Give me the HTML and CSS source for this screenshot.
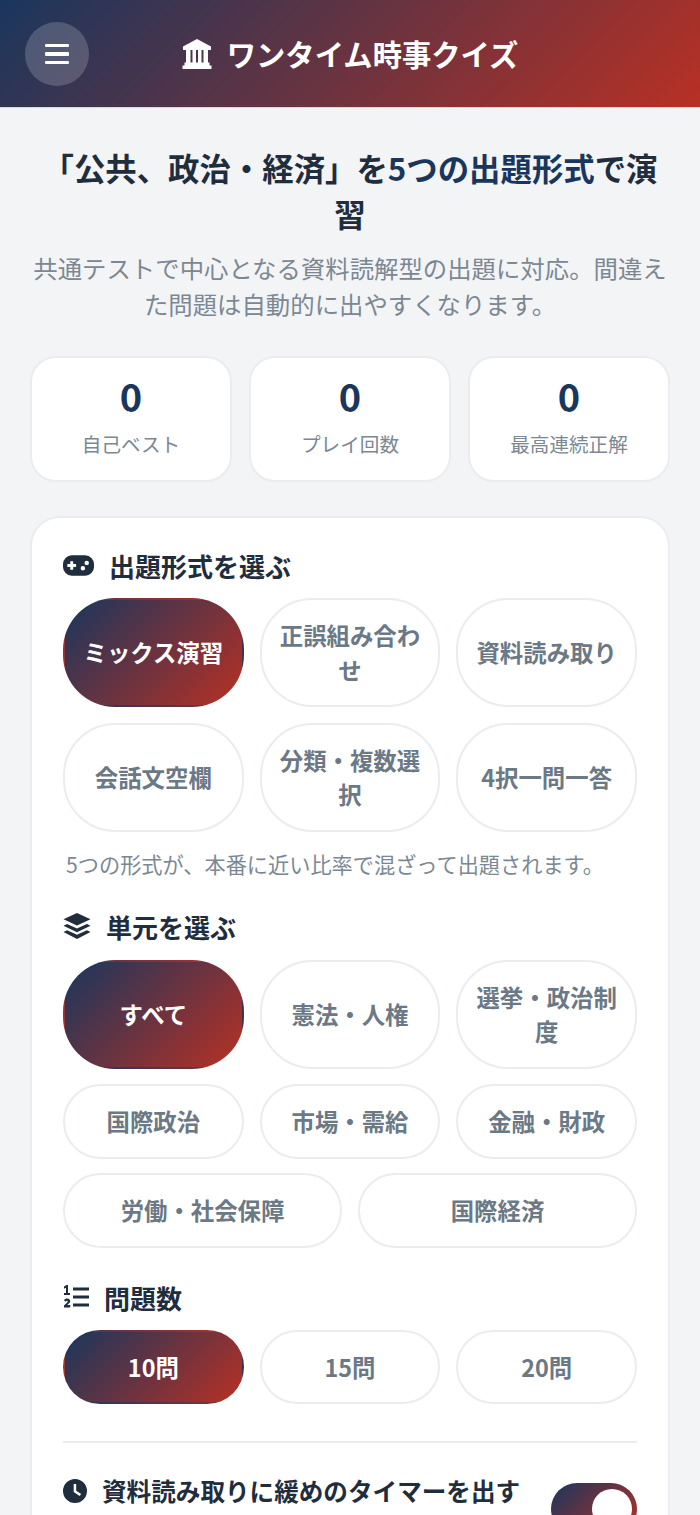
FILE: index.html
```html
<!DOCTYPE html>
<html lang="ja">
<head>
<meta charset="utf-8">
<title>ワンタイム時事クイズ</title>
<link rel="stylesheet" href="styles.css">
</head>
<body>
<header class="topbar">
  <button class="menu-btn" aria-label="メニュー"><span></span><span></span><span></span></button>
  <h1 class="brand">
    <svg class="brand-icon" viewBox="0 0 30 30"><path d="M15 0 29 7.500V11H1V7.500z"/><path d="M4 11h4.500v12.500H4zM10.500 11h3.500v12.500h-3.500zM16 11h3.500v12.500H16zM21.500 11H26v12.500h-4.500zM2.500 23.500h25V27h-25zM0.500 26.500h29V30H0.500z"/></svg>
    <span>ワンタイム時事クイズ</span>
  </h1>
  <span></span>
</header>
<main class="page">
  <section class="intro">
    <h2 class="intro-title">「公共、政治・経済」を<span class="accent">5つの出題形式</span>で演習</h2>
    <p class="intro-sub">共通テストで中心となる資料読解型の出題に対応。間違えた問題は自動的に出やすくなります。</p>
  </section>
  <section class="stats">
    <div class="stat"><div class="stat-num">0</div><div class="stat-label">自己ベスト</div></div>
    <div class="stat"><div class="stat-num">0</div><div class="stat-label">プレイ回数</div></div>
    <div class="stat"><div class="stat-num">0</div><div class="stat-label">最高連続正解</div></div>
  </section>
  <section class="card">
    <h3 class="sec-head">
      <svg class="ico ico-pad" viewBox="0 0 32 21"><path fill-rule="evenodd" d="M9 0h14a9 9 0 0 1 9 9v3a9 9 0 0 1-9 9H9a9 9 0 0 1-9-9V9a9 9 0 0 1 9-9zM7.500 6v3h-3v3h3v3h3v-3h3V9h-3V6zM24.500 5.500a2.300 2.300 0 1 0 0 4.600 2.300 2.300 0 0 0 0-4.600zM20.500 11a2.300 2.300 0 1 0 0 4.600 2.300 2.300 0 0 0 0-4.600z"/></svg>
      出題形式を選ぶ
    </h3>
    <div class="pills">
      <button class="pill active">ミックス演習</button>
      <button class="pill">正誤組み合わせ</button>
      <button class="pill">資料読み取り</button>
      <button class="pill">会話文空欄</button>
      <button class="pill">分類・複数選択</button>
      <button class="pill">4択一問一答</button>
    </div>
    <p class="hint">5つの形式が、本番に近い比率で混ざって出題されます。</p>
    <h3 class="sec-head sec-units">
      <svg class="ico ico-layers" viewBox="0 0 26 25"><path d="M13 0l13 6-13 6L0 6z"/><path d="M3.500 10.500 13 15l9.500-4.500L26 12.300 13 18.500 0 12.300z"/><path d="M3.500 16.500 13 21l9.500-4.500L26 18.300 13 25 0 18.300z"/></svg>
      単元を選ぶ
    </h3>
    <div class="pills">
      <button class="pill active">すべて</button>
      <button class="pill">憲法・人権</button>
      <button class="pill">選挙・政治制度</button>
      <button class="pill">国際政治</button>
      <button class="pill">市場・需給</button>
      <button class="pill">金融・財政</button>
    </div>
    <div class="pills pills-two">
      <button class="pill">労働・社会保障</button>
      <button class="pill">国際経済</button>
    </div>
    <h3 class="sec-head sec-count">
      <svg class="ico ico-list" viewBox="0 0 26 24"><path d="M1 1.500 3.500 0H5v8h2v2H1V8h2V2.800L1 3.700zM1 15.500C1.500 14 3 13.500 4.200 13.500c1.800 0 3 1 3 2.500 0 1.400-1 2.300-3 4h3v2.500H1v-2c2.500-2.200 3.700-3.300 3.700-4.300 0-.7-1.500-.7-1.700.6z"/><path d="M10 2.500h16v3H10zM10 10.500h16v3H10zM10 18.500h16v3H10z"/></svg>
      問題数
    </h3>
    <div class="pills">
      <button class="pill active">10問</button>
      <button class="pill">15問</button>
      <button class="pill">20問</button>
    </div>
    <hr class="rule">
    <div class="timer-row">
      <div class="timer-label">
        <svg class="ico ico-clock" viewBox="0 0 24 24"><path fill-rule="evenodd" d="M12 0a12 12 0 1 1 0 24 12 12 0 0 1 0-24zM10.700 5v8l6 4 1.400-2-4.900-3.200V5z"/></svg>
        資料読み取りに緩めのタイマーを出す
      </div>
      <span class="switch"><span class="knob"></span></span>
    </div>
  </section>
</main>
</body>
</html>
```
FILE: styles.css
```css
* { box-sizing: border-box; }
html, body { margin: 0; padding: 0; }
body {
  background: #f3f4f6;
  font-family: "Noto Sans CJK JP", "Noto Sans", sans-serif;
  color: #1f2d3d;
  height: 1515px;
  overflow: hidden;
}
.topbar {
  height: 108px;
  padding: 22px 25px;
  display: grid;
  grid-template-columns: 1fr auto 1fr;
  align-items: center;
  background: linear-gradient(135deg, #1a365d, #b83024);
  border-bottom: 1px solid #d5d8de;
}
.menu-btn {
  width: 64px;
  height: 64px;
  border: 0;
  border-radius: 50%;
  background: rgba(255, 255, 255, 0.18);
  display: flex;
  flex-direction: column;
  align-items: center;
  justify-content: center;
  gap: 5px;
  padding: 0;
}
.menu-btn span { display: block; width: 24px; height: 3.500px; background: #fff; border-radius: 1px; }
.brand {
  margin: 0;
  display: flex;
  align-items: center;
  gap: 15px;
  color: #fff;
  font-size: 29.300px;
  font-weight: 700;
  line-height: 1.5;
}
.brand-icon { width: 30px; height: 30px; fill: #fff; }
.page { padding: 37px 30px 0; }
.intro { text-align: center; padding: 0 3px; }
.intro-title {
  margin: 0;
  font-size: 31.400px;
  line-height: 46px;
  font-weight: 700;
  color: #1f2d3d;
}
.accent { color: #1a365d; }
.intro-sub {
  margin: 13px -3px 0;
  font-size: 24.400px;
  line-height: 36px;
  color: #7b8894;
}
.stats {
  margin-top: 34px;
  display: grid;
  grid-template-columns: repeat(3, 1fr);
  gap: 17px;
}
.stat {
  height: 126px;
  background: #fff;
  border: 2px solid #eaecf0;
  border-radius: 26px;
  text-align: center;
  padding-top: 11px;
}
.stat-num { font-size: 38px; line-height: 54px; font-weight: 700; color: #1a365d; }
.stat-label { margin-top: 3px; font-size: 19.600px; line-height: 36px; color: #7b8894; }
.card {
  margin-top: 34px;
  background: #fff;
  border: 2px solid #eaecf0;
  border-radius: 30px;
  padding: 28px 31px 0;
  height: 1100px;
}
.sec-head {
  margin: 0 0 13px;
  display: flex;
  align-items: center;
  gap: 15px;
  font-size: 26px;
  line-height: 39px;
  font-weight: 700;
  color: #1f2d3d;
}
.sec-units { margin-top: 26px; margin-bottom: 14px; }
.sec-count { margin-top: 30px; }
.ico { fill: #1f2d3d; flex: none; }
.ico-pad { width: 31px; height: 21px; }
.ico-layers { width: 28px; height: 26px; }
.ico-list { width: 26px; height: 24px; }
.ico-clock { width: 24px; height: 24px; }
.pills {
  display: grid;
  grid-template-columns: repeat(3, 1fr);
  gap: 15.500px 16px;
}
.pills-two { grid-template-columns: repeat(2, 1fr); margin-top: 14.500px; }
.pill {
  font-family: inherit;
  font-size: 23.400px;
  line-height: 34.500px;
  font-weight: 700;
  color: #6b7885;
  background: #fff;
  border: 2px solid #eaecf0;
  border-radius: 52px;
  padding: 18px 15px;
}
.pill.active {
  color: #fff;
  border-color: transparent;
  background: linear-gradient(135deg, #1a365d, #b83024);
}
.hint {
  margin: 15px 0 0 3px;
  font-size: 21.200px;
  line-height: 34px;
  color: #7b8894;
}
.rule { margin: 37px 0 0; border: 0; height: 2px; background: #eaecf0; }
.timer-row {
  margin-top: 28px;
  display: flex;
  justify-content: space-between;
  align-items: flex-start;
}
.timer-label {
  display: flex;
  align-items: center;
  gap: 15px;
  font-size: 24.600px;
  line-height: 39px;
  font-weight: 700;
  color: #1f2d3d;
}
.switch {
  margin-top: 12px;
  width: 86px;
  height: 52px;
  border-radius: 26px;
  background: linear-gradient(135deg, #1a365d, #b83024);
  display: flex;
  justify-content: flex-end;
  align-items: center;
  padding: 5px;
}
.knob { width: 40px; height: 40px; border-radius: 50%; background: #fff; }
```
